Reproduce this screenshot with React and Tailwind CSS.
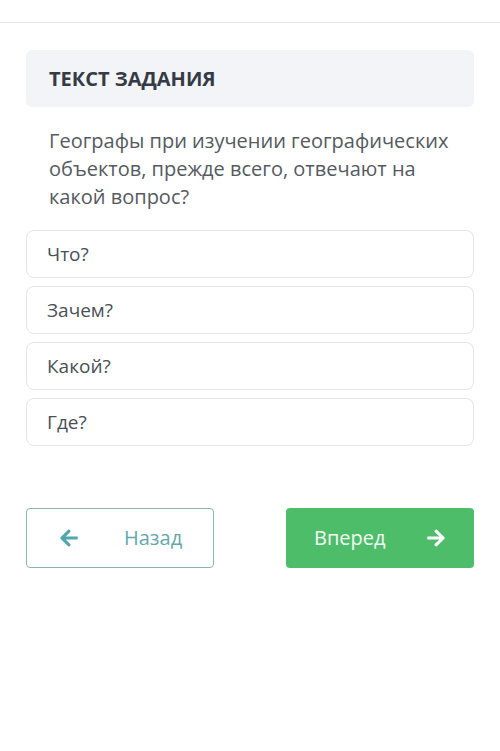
import { FaArrowLeft, FaArrowRight } from 'react-icons/fa'

const options = ['Что?', 'Зачем?', 'Какой?', 'Где?']

export default function App() {
  return (
    <div className="min-h-[751px] bg-white font-['Open_Sans',sans-serif]">
      <div className="h-[23px] border-b border-[#e3e5e8]" />
      <div className="px-[26px] pt-[27px]">
        <div className="h-[57px] rounded-md bg-[#f3f4f7] px-[23px] flex items-center">
          <span className="text-[20px] font-bold text-[#353b45]">ТЕКСТ ЗАДАНИЯ</span>
        </div>
        <p className="mt-[20px] px-[23px] text-[20px] leading-[28px] text-[#555a60]">
          Географы при изучении географических объектов, прежде всего, отвечают на какой вопрос?
        </p>
        <div className="mt-[19px] flex flex-col gap-[8px]">
          {options.map((o) => (
            <div
              key={o}
              className="h-[48px] rounded-lg border border-[#e2e4e7] px-[20px] flex items-center text-[19px] text-[#4a4f55]"
            >
              {o}
            </div>
          ))}
        </div>
        <div className="mt-[62px] flex justify-between">
          <button className="w-[188px] h-[60px] rounded-[4px] border-[1.5px] border-[#86b4b8] flex items-center pl-[32px] text-[#64a7ab]">
            <FaArrowLeft className="text-[20px] text-[#4fa6ab]" />
            <span className="ml-[45px] text-[20px]">Назад</span>
          </button>
          <button className="w-[188px] h-[60px] rounded-[4px] bg-[#4ebd6a] flex items-center pl-[28px] text-white">
            <span className="text-[20px] text-[#f2fbf4]">Вперед</span>
            <FaArrowRight className="ml-[40px] text-[20px]" />
          </button>
        </div>
      </div>
    </div>
  )
}
